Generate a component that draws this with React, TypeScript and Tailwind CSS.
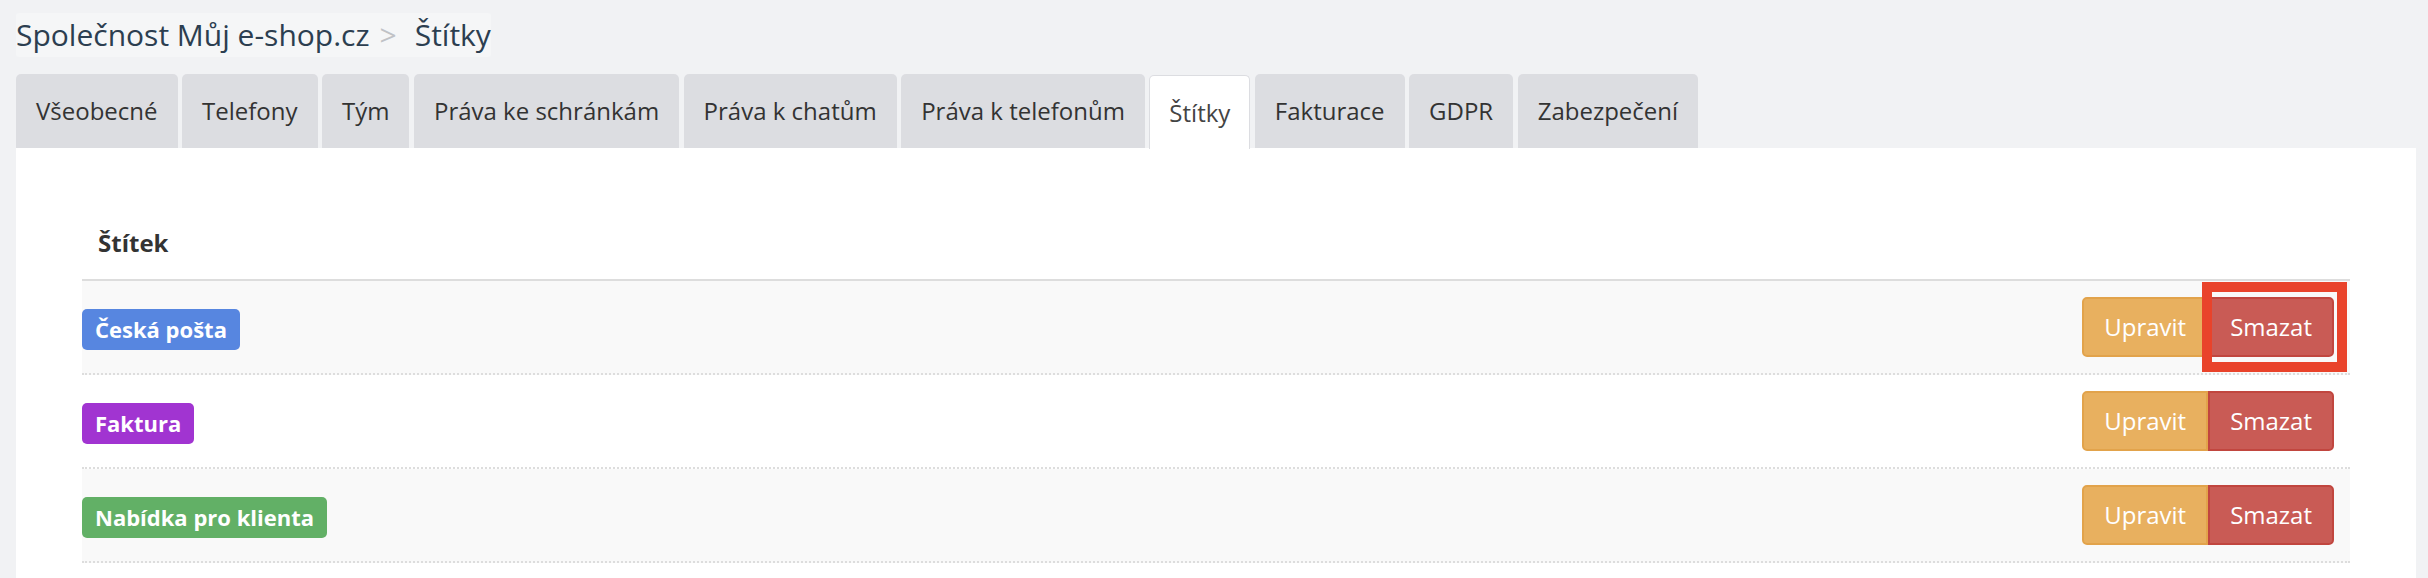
import React from 'react';

const tabs = [
  'Všeobecné',
  'Telefony',
  'Tým',
  'Práva ke schránkám',
  'Práva k chatům',
  'Práva k telefonům',
  'Štítky',
  'Fakturace',
  'GDPR',
  'Zabezpečení'
];

const labels = [
  { name: 'Česká pošta', color: 'bg-[#5786e0]' },
  { name: 'Faktura', color: 'bg-[#a134d1]' },
  { name: 'Nabídka pro klienta', color: 'bg-[#62b066]' }
];

const ACTIVE_TAB = 'Štítky';

const App = () => {
  return (
    <div className="min-h-screen bg-[#f1f2f4] font-['Open_Sans',sans-serif]">
      {/* Breadcrumb */}
      <div className="pl-4 pt-[13px]">
        <div className="inline-flex h-[44px] items-center rounded-[3px] bg-[#f5f6f7] text-[30px] leading-none text-[#2c3e50]">
          <span>Společnost Můj e-shop.cz</span>
          <span className="ml-[10px] text-[#c0c2c6]">&gt;</span>
          <span className="ml-[18px]">Štítky</span>
        </div>
      </div>

      {/* Tabs */}
      <div className="mt-[17px] flex items-end gap-[4.5px] pl-4">
        {tabs.map((tab) => {
          const active = tab === ACTIVE_TAB;
          return (
            <div
              key={tab}
              className={
                active
                  ? 'relative z-10 -mb-px flex h-[74px] items-center rounded-t-[5px] border border-b-0 border-[#dcdde1] bg-white px-[19px] text-[24px] text-[#444]'
                  : 'flex h-[74px] items-center rounded-t-[5px] bg-[#dcdde1] px-[20px] text-[24px] text-[#333]'
              }
            >
              {tab}
            </div>
          );
        })}
      </div>

      {/* Panel */}
      <div className="ml-4 mr-3 bg-white px-[66px] pb-10 pt-[53px]">
        <div className="flex h-[80px] items-center border-b-2 border-[#dddddd] pl-4 pt-[6px]">
          <span className="text-[24px] font-bold text-[#333]">Štítek</span>
        </div>

        {labels.map((label, index) => (
          <div
            key={label.name}
            className={`flex h-[94px] items-center justify-between border-b-2 border-dotted border-[#dddddd] pr-4 ${
              index % 2 === 0 ? 'bg-[#f9f9f9]' : 'bg-white'
            }`}
          >
            <span
              className={`mt-[4px] inline-flex h-[41px] items-center rounded-[5px] px-[13px] text-[22px] font-bold text-white ${label.color}`}
            >
              {label.name}
            </span>
            <div className="flex">
              <button className="flex h-[60px] items-center rounded-l-[5px] border-2 border-[#e2a34b] bg-[#e8b05f] px-[20px] text-[24px] text-white">
                Upravit
              </button>
              <div className="relative">
                <button className="flex h-[60px] items-center rounded-r-[5px] border-2 border-[#c1463f] bg-[#c95b55] px-[20px] text-[24px] text-white">
                  Smazat
                </button>
                {index === 0 && (
                  <div className="pointer-events-none absolute -bottom-[15px] -left-[6px] -right-[13px] -top-[15px] border-[10px] border-[#e9432b]" />
                )}
              </div>
            </div>
          </div>
        ))}
      </div>
    </div>
  );
};

export default App;
